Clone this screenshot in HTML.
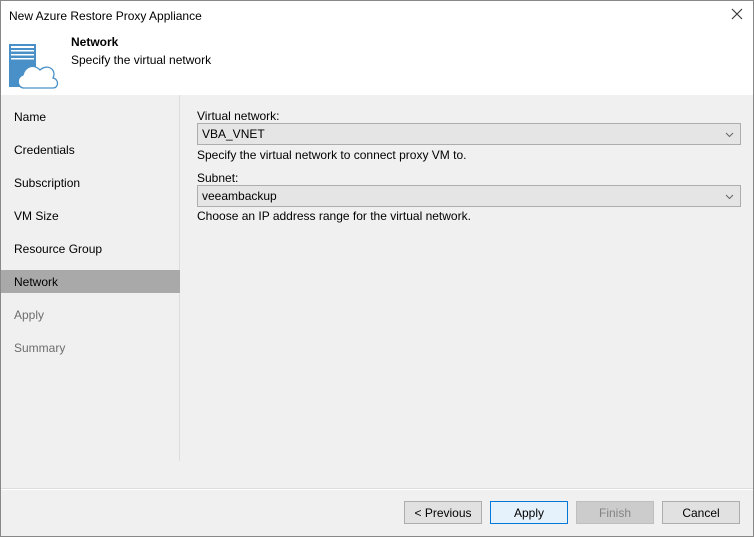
<!DOCTYPE html>
<html><head><style>
*{margin:0;padding:0;box-sizing:border-box}
body{width:754px;height:537px;overflow:hidden;font-family:"Liberation Sans",sans-serif;font-size:12px;color:#000;background:#f0f0f0;position:relative}
.win{position:absolute;left:0;top:0;width:754px;height:537px;border:1px solid #888}
.title{position:absolute;left:1px;top:1px;width:752px;height:94px;background:#fff}
.t{position:absolute;font-size:12px}
.nav{position:absolute;left:1px;top:95px;width:179px;height:366px;background:#f0f0f0;border-right:1px solid #ddd}
.nav div{position:absolute;left:13px;font-size:12px}
.sel{position:absolute;left:1px;top:270px;width:179px;height:23px;background:#a9a9a9}
.dd{position:absolute;left:197px;width:544px;height:22px;background:#e5e5e5;border:1px solid #adadad;padding:3px 0 0 4px}
.dd svg{position:absolute;right:6px;top:8px}
.btn{position:absolute;top:501px;width:78px;height:23px;border:1px solid #adadad;background:#e1e1e1;text-align:center;padding-top:4px}
</style></head><body>
<div class="win"></div>
<div class="title"></div>
<div class="t" style="left:9px;top:9px">New Azure Restore Proxy Appliance</div>
<svg style="position:absolute;left:731px;top:8px" width="12" height="12"><path d="M1 1L11 11M11 1L1 11" stroke="#333" stroke-width="1.1"/></svg>
<svg style="position:absolute;left:0;top:35px" width="65" height="60">
<rect x="9" y="9" width="27" height="43" fill="#4a90c8"/>
<rect x="11" y="11" width="23" height="2" fill="#fff"/><rect x="11" y="15" width="23" height="1.5" fill="#fff"/><rect x="11" y="19" width="23" height="1.5" fill="#fff"/><rect x="11" y="23" width="23" height="1.5" fill="#fff"/>
<path d="M24 53 C17 53 16 42 23 40 C25 32 33 28 40 35 C48 28 57 35 53 43 C59 44 59 53 53 53 Z" fill="#fff" stroke="#4a90c8" stroke-width="1.3"/>
</svg>
<div class="t" style="left:71px;top:35px;font-weight:bold">Network</div>
<div class="t" style="left:71px;top:53px">Specify the virtual network</div>
<div class="nav">
<div style="top:15px">Name</div><div style="top:48px">Credentials</div><div style="top:81px">Subscription</div><div style="top:114px">VM Size</div><div style="top:147px">Resource Group</div>
<div style="top:213px;color:#6d6d6d">Apply</div><div style="top:246px;color:#6d6d6d">Summary</div>
</div>
<div class="sel"></div>
<div class="t" style="left:14px;top:275px">Network</div>
<div class="t" style="left:197px;top:109px">Virtual network:</div>
<div class="dd" style="top:123px">VBA_VNET<svg width="9" height="6"><path d="M1 1L4.5 4.5L8 1" stroke="#666" fill="none"/></svg></div>
<div class="t" style="left:197px;top:148px">Specify the virtual network to connect proxy VM to.</div>
<div class="t" style="left:197px;top:171px">Subnet:</div>
<div class="dd" style="top:185px">veeambackup<svg width="9" height="6"><path d="M1 1L4.5 4.5L8 1" stroke="#666" fill="none"/></svg></div>
<div class="t" style="left:197px;top:209px">Choose an IP address range for the virtual network.</div>
<div style="position:absolute;left:1px;top:489px;width:752px;height:1px;background:#fff"></div>
<div style="position:absolute;left:1px;top:488px;width:752px;height:1px;background:#ddd"></div>
<div class="btn" style="left:404px">&lt; Previous</div>
<div class="btn" style="left:490px;background:#e5f1fb;border-color:#0078d7">Apply</div>
<div class="btn" style="left:576px;background:#ccc;border-color:#bfbfbf;color:#838383">Finish</div>
<div class="btn" style="left:662px">Cancel</div>
</body></html>
